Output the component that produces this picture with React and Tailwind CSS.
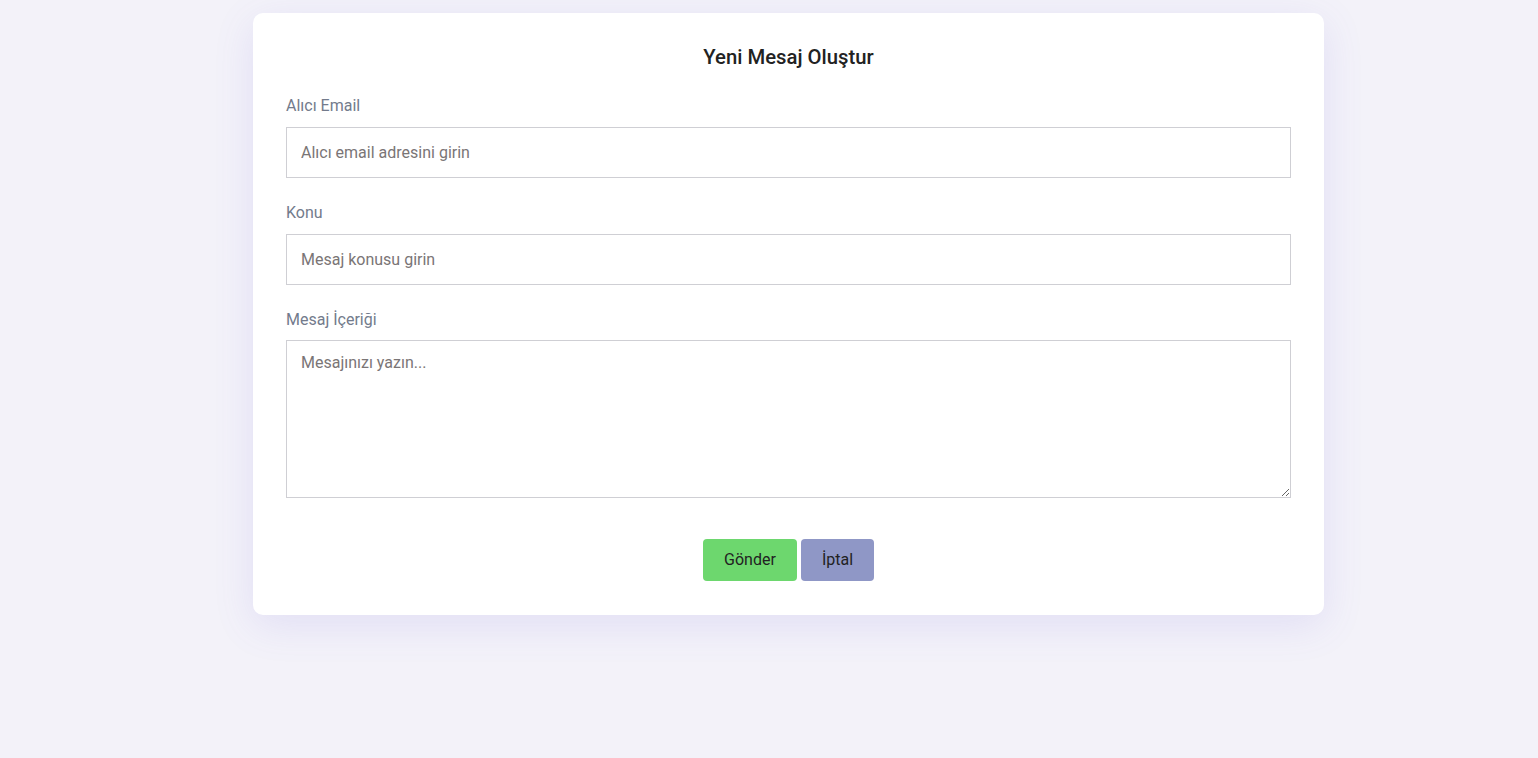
import React, { useState } from 'react';

const fields = [
  { id: 'to', label: 'Alıcı Email', placeholder: 'Alıcı email adresini girin', type: 'email' },
  { id: 'subject', label: 'Konu', placeholder: 'Mesaj konusu girin', type: 'text' },
];

const App = () => {
  const [form, setForm] = useState({ to: '', subject: '', body: '' });

  const update = (key) => (e) => setForm({ ...form, [key]: e.target.value });

  return (
    <div className="min-h-screen bg-[#f3f2f9] pt-[13px] pl-[253px] font-['Roboto',sans-serif]">
      <div className="w-[1071px] bg-white rounded-[10px] px-[33px] pt-[34px] pb-[34px] shadow-[0_10px_40px_rgba(110,95,220,0.13)]">
        <h2 className="text-center text-[20.3px] font-medium text-[#222] leading-[20px]">Yeni Mesaj Oluştur</h2>

        <form className="mt-[29px]" onSubmit={(e) => e.preventDefault()}>
          {fields.map((f) => (
            <div key={f.id} className="mb-[25px]">
              <label htmlFor={f.id} className="block text-[16px] text-[#737b8c] leading-[19px] mb-[12px]">
                {f.label}
              </label>
              <input
                id={f.id}
                type={f.type}
                value={form[f.id]}
                onChange={update(f.id)}
                placeholder={f.placeholder}
                className="block w-full h-[51px] border border-[#cfcfd4] px-[14px] text-[16px] text-[#333] placeholder:text-[#7a7576] outline-none"
              />
            </div>
          ))}

          <div>
            <label htmlFor="body" className="block text-[16px] text-[#737b8c] leading-[19px] mb-[11px]">
              Mesaj İçeriği
            </label>
            <textarea
              id="body"
              value={form.body}
              onChange={update('body')}
              placeholder="Mesajınızı yazın..."
              className="block w-full h-[158px] border border-[#cfcfd4] px-[14px] py-[10px] text-[16px] text-[#333] placeholder:text-[#7a7576] outline-none"
            />
          </div>

          <div className="flex justify-center gap-[4px] mt-[41px]">
            <button type="submit" className="w-[94px] h-[42px] rounded-[4px] bg-[#6dd76e] text-[16px] text-[#222]">
              Gönder
            </button>
            <button type="button" className="w-[73px] h-[42px] rounded-[4px] bg-[#8f97c6] text-[16px] text-[#222]">
              İptal
            </button>
          </div>
        </form>
      </div>
    </div>
  );
};

export default App;
